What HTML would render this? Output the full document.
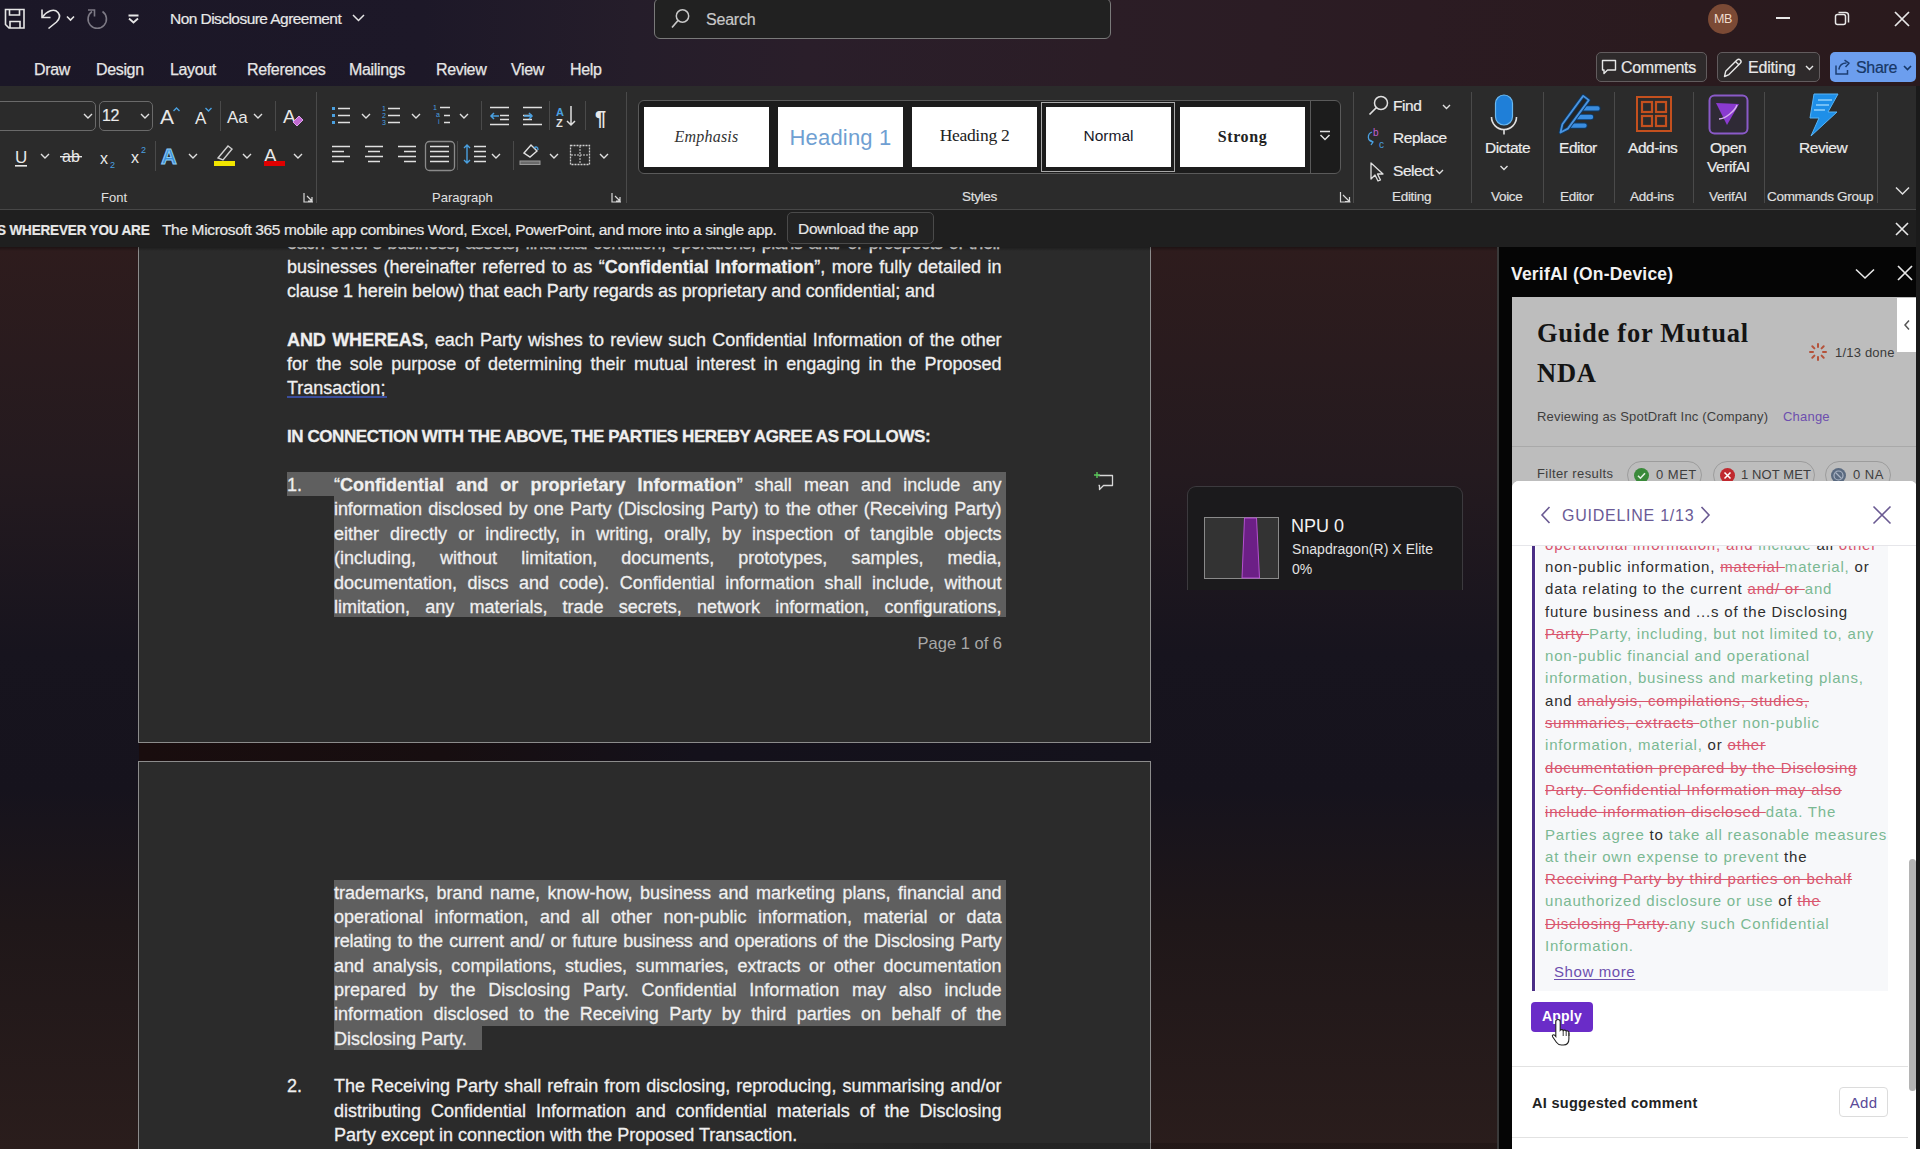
<!DOCTYPE html>
<html><head><meta charset="utf-8">
<style>
*{margin:0;padding:0;box-sizing:border-box}
html,body{width:1920px;height:1149px;overflow:hidden;background:#1a1620;font-family:"Liberation Sans",sans-serif}
.a{position:absolute}
#titlebar{left:0;top:0;width:1920px;height:86px;background:linear-gradient(90deg,#1b1727 0%,#1d1828 22%,#251d2a 33%,#2a1e2a 42%,#2b1d26 58%,#2b1b22 74%,#2a1a1e 88%,#2a1a1d 100%)}
.tt{color:#e8e8e8;font-size:15px;white-space:nowrap;-webkit-text-stroke:0.2px currentColor}
.tab{color:#e6e6e6;font-size:16px;top:60.5px;white-space:nowrap;letter-spacing:-0.35px;-webkit-text-stroke:0.25px #e6e6e6}
#ribbon{left:0;top:86px;width:1920px;height:124px;background:#2b2b2b;border-bottom:1px solid #474747}
#notif{left:0;top:210px;width:1920px;height:37px;background:#1f1f1f}
#docbg{left:0;top:247px;width:1497px;height:902px;background:linear-gradient(180deg,#2e1c1d 0%,#241a1f 25%,#17141e 45%,#16131d 60%,#1f1719 75%,#2a1d1c 100%)}
.page{background:#2b2b2b;border:1px solid #8c8c8c}
.dl{color:#efefef;font-size:18px;white-space:nowrap;height:24px;line-height:24px;-webkit-text-stroke:0.3px #efefef}
.j{text-align:justify;text-align-last:justify;white-space:normal}
.sel{background:#5f5f5f}
#panel{left:1497px;top:247px;width:423px;height:902px;background:#050505;border-left:2px solid #3a3a3a}
.sep{background:#4a4a4a;width:1px}
.lbl{color:#e0e0e0;font-size:13.5px;white-space:nowrap;letter-spacing:-0.3px;-webkit-text-stroke:0.15px #e0e0e0}
.rt{color:#ececec;font-size:15.5px;white-space:nowrap;letter-spacing:-0.45px;-webkit-text-stroke:0.2px #ececec}
.gll{font-size:15px;line-height:22.2px;height:22.2px;white-space:nowrap;letter-spacing:0.8px}
.gll .k{color:#2e2e2e}.gll .r{color:#d9566e;text-decoration:line-through;text-decoration-thickness:1px}.gll .g{color:#7bb893}
</style></head><body>
<div id="titlebar" class="a"></div>
<!-- title bar content -->
<svg class="a" style="left:0;top:0" width="420" height="44">
 <g fill="none" stroke="#e6e6e6" stroke-width="1.6">
  <path d="M5.5 9.5h18.5v18.5h-15l-3.5-3.5z"/><path d="M9.5 9.5v5.5h10v-5.5"/><path d="M10 28v-6.5h10v6.5"/>
  <path d="M42 9.5v8h8.5"/><path d="M42.5 17C47 11 54 8 58 12.5C60.5 15.5 59.5 19 56.5 22L48.5 28.5"/>
  <path d="M67 16.5l3.5 3.5 3.5-3.5" stroke-width="1.6"/>
  <path d="M128.5 15.5h10M129 18.5l4.5 4 4.5-4" stroke-width="1.8"/>
 </g>
 <g fill="none" stroke="#7d7a85" stroke-width="1.6"><path d="M102.5 11.5A9.2 9.2 0 1 1 92 11.5"/><path d="M88 10h6.5v6.5"/></g>
 <path d="M353 15l5.5 5.5 5.5-5.5" fill="none" stroke="#e6e6e6" stroke-width="1.5"/>
</svg>
<div class="a tt" style="left:170px;top:10px;font-size:15.5px;letter-spacing:-0.55px">Non Disclosure Agreement</div>
<div class="a" style="left:654px;top:-2px;width:457px;height:41px;background:#212121;border:1.5px solid #7a7a7a;border-radius:6px"></div>
<svg class="a" style="left:668px;top:6px" width="28" height="26"><circle cx="14.5" cy="10" r="6.2" fill="none" stroke="#c8c8c8" stroke-width="1.5"/><path d="M10 14.5L4 21.5" stroke="#c8c8c8" stroke-width="1.7"/></svg>
<div class="a tt" style="left:706px;top:11px;font-size:16px;color:#c8c8c8;letter-spacing:-0.2px">Search</div>
<div class="a" style="left:1708px;top:4px;width:30px;height:30px;border-radius:50%;background:#7b4a35"></div>
<div class="a" style="left:1708px;top:11.5px;width:30px;text-align:center;color:#f0dccc;font-size:12.5px;letter-spacing:-0.4px">MB</div>
<div class="a" style="left:1776px;top:17px;width:14px;height:1.6px;background:#e8e8e8"></div>
<svg class="a" style="left:1832px;top:8px" width="22" height="22"><rect x="3.5" y="6.5" width="10" height="10" rx="2" fill="none" stroke="#e8e8e8" stroke-width="1.5"/><path d="M6.5 4.5h7a3 3 0 0 1 3 3v7" fill="none" stroke="#e8e8e8" stroke-width="1.5"/></svg>
<svg class="a" style="left:1892px;top:9px" width="20" height="20"><path d="M3 3l14 14M17 3L3 17" stroke="#e8e8e8" stroke-width="1.7"/></svg>
<div class="a tab" style="left:34px">Draw</div>
<div class="a tab" style="left:96px">Design</div>
<div class="a tab" style="left:170px">Layout</div>
<div class="a tab" style="left:247px">References</div>
<div class="a tab" style="left:349px">Mailings</div>
<div class="a tab" style="left:436px">Review</div>
<div class="a tab" style="left:511px">View</div>
<div class="a tab" style="left:570px">Help</div>
<div class="a" style="left:1596px;top:52px;width:111px;height:30px;background:#2e2a2b;border:1px solid #625c5e;border-radius:5px"></div>
<svg class="a" style="left:1600px;top:58px" width="20" height="20"><path d="M2.5 2.5h13v9.5h-8l-3.5 3.5v-3.5h-1.5z" fill="none" stroke="#e8e8e8" stroke-width="1.4" stroke-linejoin="round"/></svg>
<div class="a tt" style="left:1621px;top:59px;font-size:16px;letter-spacing:-0.3px">Comments</div>
<div class="a" style="left:1717px;top:52px;width:103px;height:30px;background:#2e2a2b;border:1px solid #625c5e;border-radius:5px"></div>
<svg class="a" style="left:1721px;top:56px" width="24" height="24"><path d="M3.5 20.5l1.2-5.2L16 4a2.3 2.3 0 0 1 3.3 3.3L8 18.6z M14.5 5.5l3.5 3.5" fill="none" stroke="#e8e8e8" stroke-width="1.4" stroke-linejoin="round"/></svg>
<div class="a tt" style="left:1748px;top:59px;font-size:16px;letter-spacing:-0.2px">Editing</div>
<svg class="a" style="left:1804px;top:63px" width="12" height="10"><path d="M2 3l3.5 3.5L9 3" fill="none" stroke="#e8e8e8" stroke-width="1.4"/></svg>
<div class="a" style="left:1830px;top:52px;width:86px;height:30px;background:#6c9eee;border-radius:5px"></div>
<svg class="a" style="left:1834px;top:57px" width="22" height="22"><path d="M2 8.5V17H13.5V13" fill="none" stroke="#1d3f73" stroke-width="1.5"/><path d="M4.8 12.5C5.5 8.5 8.5 6 12.5 6" fill="none" stroke="#1d3f73" stroke-width="1.5"/><path d="M10.5 3.2L15 6.2L11.5 10" fill="none" stroke="#1d3f73" stroke-width="1.5" stroke-linejoin="round"/></svg>
<div class="a tt" style="left:1856px;top:59px;font-size:16px;color:#173766;letter-spacing:-0.3px">Share</div>
<svg class="a" style="left:1902px;top:63px" width="12" height="10"><path d="M2 3l3.5 3.5L9 3" fill="none" stroke="#173766" stroke-width="1.6"/></svg>
<div id="ribbon" class="a"></div>
<!-- ribbon: font group -->
<div class="a" style="left:-10px;top:101px;width:106px;height:30px;border:1px solid #6a6a6a;border-radius:5px"></div>
<div class="a" style="left:99px;top:101px;width:54px;height:30px;border:1px solid #6a6a6a;border-radius:5px"></div>
<div class="a rt" style="left:102px;top:107px;font-size:16px">12</div>
<svg class="a" style="left:0;top:86px" width="320" height="124">
 <g fill="none" stroke="#e0e0e0" stroke-width="1.4">
  <path d="M84 28l4 4 4-4M141 28l4 4 4-4M254 28l4 4 4-4M41 68l4 4 4-4M189 68l4 4 4-4M243 68l4 4 4-4M294 68l4 4 4-4"/>
 </g>
 <g fill="#e8e8e8" font-family="Liberation Sans" >
  <text x="160" y="38" font-size="21">A</text>
  <text x="195" y="38" font-size="17">A</text>
  <text x="227" y="37" font-size="17">Aa</text>
  <text x="283" y="37" font-size="19">A</text>
  <text x="15" y="77" font-size="17">U</text>
  <text x="62" y="76" font-size="16">ab</text>
  <text x="100" y="78" font-size="16">x</text>
  <text x="131" y="77" font-size="16">x</text>
  <text x="264" y="76" font-size="19">A</text>
 </g>
 <path d="M173.5 25l3-3 3 3" fill="none" stroke="#4aa0e0" stroke-width="1.4"/>
 <path d="M205.5 22l3 3 3-3" fill="none" stroke="#4aa0e0" stroke-width="1.4"/>
 <rect x="15" y="79" width="12" height="1.6" fill="#e8e8e8"/>
 <rect x="60" y="70" width="22" height="1.4" fill="#e8e8e8"/>
 <text x="110" y="82" font-size="9" fill="#4aa0e0" font-family="Liberation Sans">2</text>
 <text x="141" y="67" font-size="9" fill="#4aa0e0" font-family="Liberation Sans">2</text>
 <path d="M293 36l6-6 4 4-6 6z" fill="#c06ad0" stroke="#e0a0ee" stroke-width="1"/>
 <text x="161" y="78" font-size="22" font-weight="bold" fill="#3b8fd8" stroke="#8ccaf5" stroke-width="1" font-family="Liberation Sans">A</text>
 <path d="M218 72l10-12 4 3-9 11z" fill="none" stroke="#cfcfcf" stroke-width="1.4"/>
 <rect x="214" y="75" width="21" height="5" fill="#f2e600"/>
 <rect x="264" y="75" width="21" height="5" fill="#e00000"/>
 <rect x="220" y="15" width="1" height="30" fill="#4a4a4a"/><rect x="275" y="15" width="1" height="30" fill="#4a4a4a"/>
 <rect x="155" y="55" width="1" height="30" fill="#4a4a4a"/>
 <text x="101" y="116" font-size="13" fill="#e0e0e0" font-family="Liberation Sans">Font</text>
 <path d="M304 107v9h9M307 110l5 5M308 115h4v-4" fill="none" stroke="#d8d8d8" stroke-width="1.2"/>
 <rect x="316" y="6" width="1" height="111" fill="#4a4a4a"/>
</svg>
<!-- paragraph group -->
<svg class="a" style="left:320px;top:86px" width="320" height="124">
 <g fill="#4aa0e0"><rect x="12" y="21" width="3" height="3"/><rect x="12" y="28" width="3" height="3"/><rect x="12" y="35" width="3" height="3"/></g>
 <g stroke="#e0e0e0" stroke-width="1.5"><path d="M18 22.5h12M18 29.5h12M18 36.5h12"/><path d="M68 22.5h12M68 29.5h12M68 36.5h12"/><path d="M120 21.5h10M124 29.5h6M124 36.5h6"/></g>
 <g fill="#4aa0e0" font-size="7" font-family="Liberation Sans"><text x="62" y="25">1</text><text x="62" y="32">2</text><text x="62" y="39">3</text><text x="113" y="24">1</text><text x="116" y="31">a</text><text x="118" y="38">i</text></g>
 <g fill="none" stroke="#e0e0e0" stroke-width="1.4"><path d="M42 28l4 4 4-4M92 28l4 4 4-4M140 28l4 4 4-4"/></g>
 <g stroke="#e0e0e0" stroke-width="1.5"><path d="M170 21.5h19M180 29.5h9M180 33.5h9M170 38.5h19"/><path d="M203 21.5h19M203 29.5h9M203 33.5h9M203 38.5h19"/></g>
 <path d="M171 30h8M174 27l-3 3 3 3" fill="none" stroke="#4aa0e0" stroke-width="1.5"/>
 <path d="M204 30h8M209 27l3 3-3 3" fill="none" stroke="#4aa0e0" stroke-width="1.5"/>
 <text x="236" y="30" font-size="11" font-weight="bold" fill="#4aa0e0" font-family="Liberation Sans">A</text>
 <text x="236" y="41" font-size="11" font-weight="bold" fill="#e0e0e0" font-family="Liberation Sans">Z</text>
 <path d="M251 20v19M247 35l4 4 4-4" fill="none" stroke="#e0e0e0" stroke-width="1.5"/>
 <text x="275" y="39" font-size="20" font-weight="bold" fill="#e8e8e8" font-family="Liberation Sans">¶</text>
 <g fill="#4a4a4a"><rect x="161" y="15" width="1" height="29"/><rect x="229" y="15" width="1" height="29"/><rect x="265" y="15" width="1" height="29"/><rect x="137" y="55" width="1" height="29"/><rect x="193" y="55" width="1" height="29"/></g>
<g transform="translate(9,0)">
 <g stroke="#e0e0e0" stroke-width="1.5"><path d="M3 60.5h18M3 65.5h12M3 70.5h18M3 75.5h12"/><path d="M36 60.5h18M39 65.5h12M36 70.5h18M39 75.5h12"/><path d="M69 60.5h18M75 65.5h12M69 70.5h18M75 75.5h12"/><path d="M101 60.5h19M101 65.5h19M101 70.5h19M101 75.5h19"/></g>
 <rect x="96.5" y="55.5" width="29" height="29" rx="4" fill="none" stroke="#8a8a8a" stroke-width="1.3"/>
 <g stroke="#e0e0e0" stroke-width="1.5"><path d="M145 60.5h12M145 65.5h12M145 70.5h12M145 75.5h12"/></g>
 <path d="M138 59v18M135 62l3-3 3 3M135 74l3 3 3-3" fill="none" stroke="#4aa0e0" stroke-width="1.4"/>
 </g>
 <g fill="none" stroke="#e0e0e0" stroke-width="1.4"><path d="M172 68l4 4 4-4M230 68l4 4 4-4M280 68l4 4 4-4"/></g>
 <path d="M204 67l7-8 6 6-7 6z" fill="none" stroke="#e0e0e0" stroke-width="1.4"/><path d="M214 62c2-2 4-1 4 2" fill="none" stroke="#4aa0e0" stroke-width="1.4"/>
 <rect x="200" y="75" width="20" height="3.5" fill="#6a6a6a" stroke="#9a9a9a" stroke-width="1"/>
 <rect x="250.5" y="59.5" width="19" height="19" fill="none" stroke="#d0d0d0" stroke-width="1.3" stroke-dasharray="2 1"/>
 <path d="M260 60v18M251 69h18" stroke="#d0d0d0" stroke-width="1" stroke-dasharray="2 1"/>
 <text x="112" y="116" font-size="13" fill="#e0e0e0" font-family="Liberation Sans">Paragraph</text>
 <path d="M292 107v9h9M295 110l5 5M296 115h4v-4" fill="none" stroke="#d8d8d8" stroke-width="1.2"/>
 <rect x="306" y="6" width="1" height="111" fill="#4a4a4a"/>
</svg>
<!-- styles group -->
<div class="a" style="left:638px;top:100px;width:703px;height:74px;background:#1c1c1c;border:1px solid #5a5a5a;border-radius:6px"></div>
<div class="a" style="left:1310px;top:101px;width:1px;height:72px;background:#5a5a5a"></div>
<div class="a" style="left:644px;top:107px;width:125px;height:60px;background:#fff"></div>
<div class="a" style="left:778px;top:107px;width:125px;height:60px;background:#fff"></div>
<div class="a" style="left:912px;top:107px;width:125px;height:60px;background:#fff"></div>
<div class="a" style="left:1041px;top:102px;width:134px;height:70px;border:1.5px solid #a8a8a8"></div>
<div class="a" style="left:1046px;top:107px;width:125px;height:60px;background:#fff"></div>
<div class="a" style="left:1180px;top:107px;width:125px;height:60px;background:#fff"></div>
<div class="a" style="left:644px;top:127.5px;width:125px;text-align:center;font:italic 16px 'Liberation Serif';color:#333;letter-spacing:0.2px">Emphasis</div>
<div class="a" style="left:778px;top:124.5px;width:125px;text-align:center;font:22px 'Liberation Sans';color:#6f9fd2;letter-spacing:0.2px">Heading 1</div>
<div class="a" style="left:912px;top:125px;width:125px;text-align:center;font:17.5px 'Liberation Serif';color:#222;letter-spacing:-0.3px">Heading 2</div>
<div class="a" style="left:1046px;top:127px;width:125px;text-align:center;font:15.5px 'Liberation Sans';color:#1a1a2a">Normal</div>
<div class="a" style="left:1180px;top:127.5px;width:125px;text-align:center;font:bold 16px 'Liberation Serif';color:#222;letter-spacing:0.6px">Strong</div>
<svg class="a" style="left:1316px;top:128px" width="18" height="16"><path d="M4 3.5h10M4.5 7l4.5 4.5L13.5 7" fill="none" stroke="#e0e0e0" stroke-width="1.5"/></svg>
<div class="a lbl" style="left:962px;top:189px">Styles</div>
<svg class="a" style="left:1338px;top:190px" width="16" height="16"><path d="M2.5 2v10h10M5 5l6 6M7 11.5h4.5V7" fill="none" stroke="#d8d8d8" stroke-width="1.2"/></svg>
<div class="a sep" style="left:1353px;top:92px;height:111px"></div>
<!-- editing group -->
<svg class="a" style="left:1360px;top:86px" width="120" height="124">
 <circle cx="21" cy="17" r="6.5" fill="none" stroke="#e0e0e0" stroke-width="1.5"/><path d="M16.5 21.5L9.5 28.5" stroke="#e0e0e0" stroke-width="1.7"/>
 <path d="M83 19l3.5 3.5 3.5-3.5M76 84l3.5 3.5 3.5-3.5" fill="none" stroke="#e0e0e0" stroke-width="1.4"/>
 <text x="13" y="50" font-size="10" fill="#c060d0" font-family="Liberation Sans">b</text>
 <text x="19" y="62" font-size="10" fill="#4aa0e0" font-family="Liberation Sans">c</text>
 <path d="M12 46c-5 2-5 9 1 10M10 54l3 2-2 3" fill="none" stroke="#4aa0e0" stroke-width="1.3"/>
 <path d="M11 77v16l4-4 3 6 2.5-1-3-6h5.5z" fill="none" stroke="#e0e0e0" stroke-width="1.3" stroke-linejoin="round"/>
</svg>
<div class="a rt" style="left:1393px;top:97px">Find</div>
<div class="a rt" style="left:1393px;top:129px">Replace</div>
<div class="a rt" style="left:1393px;top:162px">Select</div>
<div class="a lbl" style="left:1392px;top:189px">Editing</div>
<div class="a sep" style="left:1471px;top:92px;height:111px"></div>
<!-- voice -->
<svg class="a" style="left:1480px;top:86px" width="60" height="90">
 <rect x="15.5" y="9" width="17" height="30" rx="8.5" fill="#1f7fd8" stroke="#6ab8f0" stroke-width="1.2"/>
 <path d="M11.5 31a12.5 12.5 0 0 0 25 0M24 43.5v5" fill="none" stroke="#e0e0e0" stroke-width="1.6"/>
 <path d="M20.5 80l3.5 3.5 3.5-3.5" fill="none" stroke="#e0e0e0" stroke-width="1.4"/>
</svg>
<div class="a rt" style="left:1485px;top:139px">Dictate</div>
<div class="a lbl" style="left:1491px;top:189px">Voice</div>
<div class="a sep" style="left:1543px;top:92px;height:111px"></div>
<!-- editor -->
<svg class="a" style="left:1555px;top:90px" width="50" height="50">
 <path d="M28 18.4h14.5M22 27h14M15 35.6h14.5" stroke="#0d3a66" stroke-width="6.2" stroke-linecap="round"/>
 <path d="M28 18.4h14.5M22 27h14M15 35.6h14.5" stroke="#3a8de0" stroke-width="4.4" stroke-linecap="round"/>
 <path d="M5.5 42.5L7.4 34.2L28.2 5.9L33.8 10.1L12.9 38.6Z" fill="#242424" stroke="#0d3a66" stroke-width="3.6" stroke-linejoin="round"/>
 <path d="M5.5 42.5L7.4 34.2L28.2 5.9L33.8 10.1L12.9 38.6Z" fill="none" stroke="#4a94e0" stroke-width="1.8" stroke-linejoin="round"/>
</svg>
<div class="a rt" style="left:1559px;top:139px">Editor</div>
<div class="a lbl" style="left:1560px;top:189px">Editor</div>
<div class="a sep" style="left:1614px;top:92px;height:111px"></div>
<!-- addins -->
<div class="a" style="left:1636px;top:96px;width:36px;height:36px;border:2.5px solid #c4501e"></div>
<svg class="a" style="left:1636px;top:96px" width="36" height="36"><g fill="none" stroke="#c4501e" stroke-width="2.2"><rect x="6" y="6" width="10" height="10"/><rect x="20" y="6" width="10" height="10"/><rect x="6" y="20" width="10" height="10"/><rect x="20" y="20" width="10" height="10"/></g></svg>
<div class="a rt" style="left:1628px;top:139px">Add-ins</div>
<div class="a lbl" style="left:1630px;top:189px">Add-ins</div>
<div class="a sep" style="left:1693px;top:92px;height:111px"></div>
<!-- verifai -->
<svg class="a" style="left:1708px;top:94px" width="42" height="42">
 <rect x="1.5" y="1.5" width="38" height="38" rx="5" fill="#2f2a36" stroke="#8a5ac8" stroke-width="2"/>
 <path d="M8 9l23 1-12 21z" fill="#8a3ad0"/>
 <path d="M11 25c6 0 16-8 18-14" fill="none" stroke="#d8b0f0" stroke-width="1.5"/>
</svg>
<div class="a rt" style="left:1710px;top:139px">Open</div>
<div class="a rt" style="left:1707px;top:158px">VerifAI</div>
<div class="a lbl" style="left:1709px;top:189px">VerifAI</div>
<div class="a sep" style="left:1764px;top:92px;height:111px"></div>
<!-- review -->
<svg class="a" style="left:1800px;top:92px" width="44" height="46">
 <path d="M14 2h24l-10 18h9l-26 24 8-18h-9z" fill="#1e8fe8" stroke="#56b4f6" stroke-width="1"/>
 <path d="M18 8h14M16 13h13M14 18h11" stroke="#8fd0fa" stroke-width="1.6"/>
</svg>
<div class="a rt" style="left:1799px;top:139px">Review</div>
<div class="a lbl" style="left:1767px;top:189px">Commands Group</div>
<div class="a sep" style="left:1877px;top:92px;height:111px"></div>
<svg class="a" style="left:1893px;top:184px" width="20" height="14"><path d="M3 3.5l6.5 6.5 6.5-6.5" fill="none" stroke="#e0e0e0" stroke-width="1.5"/></svg>
<div id="notif" class="a"></div>
<div class="a tt" style="left:-3px;top:222px;font-size:14.5px;font-weight:bold;letter-spacing:-0.2px;transform:scaleX(0.935);transform-origin:0 0">S WHEREVER YOU ARE</div>
<div class="a tt" style="left:162px;top:221px;font-size:15.5px;letter-spacing:-0.35px">The Microsoft 365 mobile app combines Word, Excel, PowerPoint, and more into a single app.</div>
<div class="a" style="left:787px;top:212px;width:147px;height:32px;border:1px solid #4a4a4a;border-radius:5px;background:#232323"></div>
<div class="a tt" style="left:798px;top:220px;font-size:15.5px;letter-spacing:-0.3px">Download the app</div>
<svg class="a" style="left:1894px;top:221px" width="16" height="16"><path d="M2 2l12 12M14 2L2 14" stroke="#e8e8e8" stroke-width="1.6"/></svg>
<div id="docbg" class="a"></div>
<!-- document -->
<div class="a" style="left:0;top:247px;width:1497px;height:902px;overflow:hidden"><div class="a" style="left:0;top:-247px;width:1920px;height:1149px">
<div class="a page" style="left:138px;top:200px;width:1013px;height:543px"></div>
<div class="a page" style="left:138px;top:761px;width:1013px;height:420px"></div>
<div class="a" style="left:139px;top:743px;width:1011px;height:18px;background:linear-gradient(90deg,#190d0e 0%,#170e10 30%,#14111b 55%,#14121c 100%)"></div>
<div class="a sel" style="left:287px;top:472.2px;width:47px;height:24.2px"></div>
<div class="a sel" style="left:334px;top:472.2px;width:672px;height:145.3px"></div>
<div class="a sel" style="left:334px;top:880px;width:672px;height:146px"></div>
<div class="a sel" style="left:334px;top:1025.5px;width:148px;height:24.5px"></div>
<div class="a dl j" style="left:287px;top:231.3px;width:714.5px;letter-spacing:-0.46px;">each other’s business, assets, financial condition, operations, plans and/ or prospects of their</div>
<div class="a dl j" style="left:287px;top:255.3px;width:714.5px;">businesses (hereinafter referred to as “<b>Confidential Information</b>”, more fully detailed in</div>
<div class="a dl" style="left:287px;top:279.4px;width:714.5px;"><span style='letter-spacing:-0.13px'>clause 1 herein below) that each Party regards as proprietary and confidential; and</span></div>
<div class="a dl j" style="left:287px;top:327.8px;width:714.5px;letter-spacing:-0.08px;"><b>AND WHEREAS</b>, each Party wishes to review such Confidential Information of the other</div>
<div class="a dl j" style="left:287px;top:352.3px;width:714.5px;">for the sole purpose of determining their mutual interest in engaging in the Proposed</div>
<div class="a dl" style="left:287px;top:376.3px;width:714.5px;"><span class='ul'>Transaction;</span></div>
<div class="a dl" style="left:287px;top:424.4px;width:714.5px;"><b style='font-size:17px;letter-spacing:-0.42px'>IN CONNECTION WITH THE ABOVE, THE PARTIES HEREBY AGREE AS FOLLOWS:</b></div>
<div class="a dl" style="left:287px;top:472.8px;width:47.0px;">1.</div>
<div class="a dl j" style="left:334px;top:472.8px;width:667.5px;">“<b>Confidential and or proprietary Information</b>” shall mean and include any</div>
<div class="a dl j" style="left:334px;top:497.3px;width:667.5px;letter-spacing:-0.11px;">information disclosed by one Party (Disclosing Party) to the other (Receiving Party)</div>
<div class="a dl j" style="left:334px;top:521.8px;width:667.5px;">either directly or indirectly, in writing, orally, by inspection of tangible objects</div>
<div class="a dl j" style="left:334px;top:546.1px;width:667.5px;">(including, without limitation, documents, prototypes, samples, media,</div>
<div class="a dl j" style="left:334px;top:570.5px;width:667.5px;">documentation, discs and code). Confidential information shall include, without</div>
<div class="a dl j" style="left:334px;top:594.8px;width:667.5px;">limitation, any materials, trade secrets, network information, configurations,</div>
<div class="a dl j" style="left:334px;top:880.8px;width:667.5px;">trademarks, brand name, know-how, business and marketing plans, financial and</div>
<div class="a dl j" style="left:334px;top:905.1px;width:667.5px;">operational information, and all other non-public information, material or data</div>
<div class="a dl j" style="left:334px;top:929.4px;width:667.5px;letter-spacing:-0.21px;">relating to the current and/ or future business and operations of the Disclosing Party</div>
<div class="a dl j" style="left:334px;top:953.7px;width:667.5px;">and analysis, compilations, studies, summaries, extracts or other documentation</div>
<div class="a dl j" style="left:334px;top:978.0px;width:667.5px;">prepared by the Disclosing Party. Confidential Information may also include</div>
<div class="a dl j" style="left:334px;top:1002.3px;width:667.5px;">information disclosed to the Receiving Party by third parties on behalf of the</div>
<div class="a dl" style="left:334px;top:1026.6px;width:667.5px;">Disclosing Party.</div>
<div class="a dl" style="left:287px;top:1074.4px;width:47.0px;">2.</div>
<div class="a dl j" style="left:334px;top:1074.4px;width:667.5px;">The Receiving Party shall refrain from disclosing, reproducing, summarising and/or</div>
<div class="a dl j" style="left:334px;top:1098.6px;width:667.5px;">distributing Confidential Information and confidential materials of the Disclosing</div>
<div class="a dl" style="left:334px;top:1122.8px;width:667.5px;">Party except in connection with the Proposed Transaction.</div>
<div class="a" style="left:287px;top:395.5px;width:100px;height:2px;background:#3a4d9c"></div>
<div class="a" style="left:900px;top:634px;width:102px;text-align:right;color:#a8a8a8;font-size:16.5px;white-space:nowrap">Page 1 of 6</div>
<svg class="a" style="left:1092px;top:470px" width="24" height="22"><path d="M6.5 5.5h14v10h-9l-4 4v-4h-1" fill="none" stroke="#d8d8d8" stroke-width="1.3" stroke-linejoin="round"/><path d="M5 2v6M2 5h6" stroke="#5ac85a" stroke-width="1.4"/></svg>
<div class="a" style="left:139px;top:1143px;width:1358px;height:6px;background:linear-gradient(90deg,rgba(0,0,0,0) 0%,rgba(0,0,0,0) 45%,rgba(0,0,0,0.16) 60%,rgba(0,0,0,0.16) 100%)"></div>
</div></div>
<div class="a" style="left:0;top:247px;width:1497px;height:4px;background:linear-gradient(180deg,rgba(0,0,0,0.35),rgba(0,0,0,0))"></div>
<div id="panel" class="a"></div>
<div class="a" style="left:1511px;top:263.5px;color:#f2f2f2;font-size:17.5px;font-weight:bold;letter-spacing:0.2px;white-space:nowrap">VerifAI (On-Device)</div>
<svg class="a" style="left:1852px;top:262px" width="26" height="22"><path d="M4 7.5l9 8.5 9-8.5" fill="none" stroke="#e8e8e8" stroke-width="1.6"/></svg>
<svg class="a" style="left:1895px;top:263px" width="20" height="20"><path d="M3 3l14 14M17 3L3 17" stroke="#e8e8e8" stroke-width="1.7"/></svg>
<!-- web content -->
<div class="a" style="left:1512px;top:297px;width:405px;height:852px;overflow:hidden;background:#bdbdbd">
 <div class="a" style="left:0;top:0;width:1920px;height:1149px;transform:translate(-1512px,-297px)">
  <div class="a" style="left:1537px;top:314px;font:bold 26.5px 'Liberation Serif';color:#141414;letter-spacing:0.75px;white-space:nowrap;line-height:39.5px">Guide for Mutual<br>NDA</div>
  <svg class="a" style="left:1808px;top:342px" width="20" height="20"><g stroke="#b5523a" stroke-width="2" stroke-linecap="round"><path d="M10 2v3M10 15v3M2 10h3M15 10h3M4.3 4.3l2.1 2.1M13.6 13.6l2.1 2.1M4.3 15.7l2.1-2.1M13.6 6.4l2.1-2.1"/></g></svg>
  <div class="a" style="left:1835px;top:345px;font-size:13px;color:#3a3a3a;white-space:nowrap;letter-spacing:0.2px">1/13 done</div>
  <div class="a" style="left:1897px;top:298px;width:20px;height:54px;background:#fff"></div>
  <svg class="a" style="left:1902px;top:318px" width="10" height="14"><path d="M7 2.5L3 7l4 4.5" fill="none" stroke="#555" stroke-width="1.5"/></svg>
  <div class="a" style="left:1537px;top:409px;font-size:13px;color:#3e3e3e;white-space:nowrap;letter-spacing:0.18px">Reviewing as SpotDraft Inc (Company)</div>
  <div class="a" style="left:1783px;top:409px;font-size:13px;color:#6d4fae;white-space:nowrap;letter-spacing:0.2px">Change</div>
  <div class="a" style="left:1512px;top:446px;width:405px;height:1px;background:#a9a9a9"></div>
  <div class="a" style="left:1537px;top:466px;font-size:13px;color:#3e3e3e;white-space:nowrap;letter-spacing:0.4px">Filter results</div>
  <div class="a" style="left:1627px;top:461px;width:75px;height:28px;border:1px solid #9c9c9c;border-radius:14px"></div>
  <div class="a" style="left:1713px;top:461px;width:102px;height:28px;border:1px solid #9c9c9c;border-radius:14px"></div>
  <div class="a" style="left:1825px;top:461px;width:66px;height:28px;border:1px solid #9c9c9c;border-radius:14px"></div>
  <div class="a" style="left:1634px;top:468px;width:15px;height:15px;border-radius:50%;background:#3a8a3a"></div>
  <div class="a" style="left:1720px;top:468px;width:15px;height:15px;border-radius:50%;background:#c0282e"></div>
  <div class="a" style="left:1831px;top:468px;width:15px;height:15px;border-radius:50%;background:#5a6a80"></div>
  <svg class="a" style="left:1634px;top:468px" width="15" height="15"><path d="M4 7.8l2.4 2.4L11 5.2" fill="none" stroke="#e8f4e8" stroke-width="1.6"/></svg>
  <svg class="a" style="left:1720px;top:468px" width="15" height="15"><path d="M4.5 4.5l6 6M10.5 4.5l-6 6" stroke="#fff" stroke-width="1.5"/></svg>
  <svg class="a" style="left:1831px;top:468px" width="15" height="15"><circle cx="7.5" cy="7.5" r="4.5" fill="none" stroke="#aab4c4" stroke-width="1.2"/><path d="M4.5 4.5l6 6" stroke="#aab4c4" stroke-width="1.2"/></svg>
  <div class="a" style="left:1656px;top:467px;font-size:13px;color:#3e3e3e;white-space:nowrap;letter-spacing:0.5px">0 MET</div>
  <div class="a" style="left:1741px;top:467px;font-size:13px;color:#3e3e3e;white-space:nowrap;letter-spacing:0.1px">1 NOT MET</div>
  <div class="a" style="left:1853px;top:467px;font-size:13px;color:#3e3e3e;white-space:nowrap;letter-spacing:0.5px">0 NA</div>
  <!-- modal -->
  <div class="a" style="left:1512px;top:480.5px;width:405px;height:700px;background:#fff;border-radius:7px 7px 0 0"></div>
  <div class="a" style="left:1536px;top:540px;width:352px;height:451px;background:#f7f8fa"></div>
  <div class="a" style="left:1532px;top:540px;width:3px;height:451px;background:#4b2f86"></div>
  
  <!--glstart--><div class="a gll" style="left:1545px;top:533.6px"><span class="r">operational information, and </span><span class="g">include </span><span class="k">all </span><span class="r">other</span></div>
<div class="a gll" style="left:1545px;top:555.9px"><span class="k">non-public information, </span><span class="r">material </span><span class="g">material,</span><span class="k"> or</span></div>
<div class="a gll" style="left:1545px;top:578.2px"><span class="k">data relating to the current </span><span class="r">and/ or </span><span class="g">and</span></div>
<div class="a gll" style="left:1545px;top:600.5px"><span class="k">future business and ...s of the Disclosing</span></div>
<div class="a gll" style="left:1545px;top:622.8px"><span class="r">Party </span><span class="g">Party, including, but not limited to, any</span></div>
<div class="a gll" style="left:1545px;top:645.1px"><span class="g">non-public financial and operational</span></div>
<div class="a gll" style="left:1545px;top:667.4px"><span class="g">information, business and marketing plans,</span></div>
<div class="a gll" style="left:1545px;top:689.7px"><span class="k">and </span><span class="r">analysis, compilations, studies,</span></div>
<div class="a gll" style="left:1545px;top:712.0px"><span class="r">summaries, extracts </span><span class="g">other non-public</span></div>
<div class="a gll" style="left:1545px;top:734.3px"><span class="g">information, material,</span><span class="k"> or </span><span class="r">other</span></div>
<div class="a gll" style="left:1545px;top:756.6px"><span class="r">documentation prepared by the Disclosing</span></div>
<div class="a gll" style="left:1545px;top:778.9px"><span class="r">Party. Confidential Information may also</span></div>
<div class="a gll" style="left:1545px;top:801.2px"><span class="r">include information disclosed </span><span class="g">data. The</span></div>
<div class="a gll" style="left:1545px;top:823.5px"><span class="g">Parties agree </span><span class="k">to </span><span class="g">take all reasonable measures</span></div>
<div class="a gll" style="left:1545px;top:845.8px"><span class="g">at their own expense to prevent </span><span class="k">the</span></div>
<div class="a gll" style="left:1545px;top:868.1px"><span class="r">Receiving Party by third parties on behalf</span></div>
<div class="a gll" style="left:1545px;top:890.4px"><span class="g">unauthorized disclosure or use </span><span class="k">of </span><span class="r">the</span></div>
<div class="a gll" style="left:1545px;top:912.7px"><span class="r">Disclosing Party.</span><span class="g">any such Confidential</span></div>
<div class="a gll" style="left:1545px;top:935.0px"><span class="g">Information.</span></div><!--glend-->
  <div class="a" style="left:1512px;top:480.5px;width:405px;height:65px;background:#fff;border-radius:7px 7px 0 0;border-bottom:1px solid #e6e6ea"></div>
  <svg class="a" style="left:1538px;top:504px" width="16" height="22"><path d="M11.5 3L4 11l7.5 8" fill="none" stroke="#6a5a92" stroke-width="1.6"/></svg>
  <div class="a" style="left:1562px;top:507px;font-size:16px;color:#6a5a96;white-space:nowrap;letter-spacing:0.75px">GUIDELINE 1/13</div>
  <svg class="a" style="left:1697px;top:504px" width="16" height="22"><path d="M4.5 3L12 11l-7.5 8" fill="none" stroke="#6a5a92" stroke-width="1.6"/></svg>
  <svg class="a" style="left:1870px;top:503px" width="24" height="24"><path d="M3.5 3.5l17 17M20.5 3.5l-17 17" stroke="#6a5a92" stroke-width="1.6"/></svg>
  <div class="a" style="left:1554px;top:963px;font-size:15px;color:#6d4fae;white-space:nowrap;letter-spacing:0.6px;text-decoration:underline;text-underline-offset:2px">Show more</div>
  <div class="a" style="left:1531px;top:1001.5px;width:62px;height:30px;background:#6a2cc8;border-radius:4px"></div>
  <div class="a" style="left:1531px;top:1008px;width:62px;text-align:center;font-size:14px;font-weight:bold;color:#fff;letter-spacing:0.2px">Apply</div>
  <svg class="a" style="left:1551px;top:1016px" width="26" height="32"><path d="M7 3.5c1.4 0 2.2.8 2.2 2.2v8.5c.5-.7 2.6-.9 3 .4.6-.8 2.6-.7 3 .6.7-.6 2.6-.3 2.7 1.3v6.5c0 3.5-2 6-5.5 6h-2c-2.5 0-3.7-1-5-2.8l-3.8-5.5c-.8-1.3.9-2.6 2-1.5l1.2 1.3V5.7C4.8 4.3 5.6 3.5 7 3.5z" fill="#fff" stroke="#222" stroke-width="1.1"/><path d="M12.2 15v5M15.2 15.5v4.5M18 16.5v3.5" stroke="#222" stroke-width="0.9"/></svg>
  <div class="a" style="left:1512px;top:1066px;width:396px;height:1px;background:#e2e2e2"></div>
  <div class="a" style="left:1532px;top:1095px;font-size:14.5px;font-weight:bold;color:#222;white-space:nowrap;letter-spacing:0.3px">AI suggested comment</div>
  <div class="a" style="left:1839px;top:1087px;width:49px;height:30px;border:1px solid #dcdcdc;border-radius:4px"></div>
  <div class="a" style="left:1839px;top:1094px;width:49px;text-align:center;font-size:15px;color:#5a4a98;letter-spacing:0.3px">Add</div>
  <div class="a" style="left:1512px;top:1137px;width:396px;height:1px;background:#e2e2e2"></div>
  <div class="a" style="left:1909px;top:859px;width:7px;height:232px;background:#b4b4b4;border-radius:4px"></div>
 </div>
</div>
<div class="a" style="left:1916px;top:86px;width:4px;height:1063px;background:#1a1a1a"></div>
<!-- NPU widget -->
<div class="a" style="left:1187px;top:486px;width:276px;height:104px;background:#1b1a1c;border:1px solid #3c3a3e;border-bottom:none;border-radius:9px 9px 0 0"></div>
<div class="a" style="left:1204px;top:517px;width:75px;height:62px;background:#333;border:1px solid #8a8a8a"></div>
<svg class="a" style="left:1238px;top:517px" width="26" height="62"><path d="M4 61L6.5 1h12L21.5 61z" fill="#6c1f86" stroke="#b450d0" stroke-width="1"/></svg>
<div class="a" style="left:1291px;top:516px;font-size:18px;color:#f2f2f2;white-space:nowrap">NPU 0</div>
<div class="a" style="left:1292px;top:541px;font-size:14px;color:#e2e2e2;white-space:nowrap;letter-spacing:0.05px">Snapdragon(R) X Elite</div>
<div class="a" style="left:1292px;top:561px;font-size:14px;color:#e2e2e2;white-space:nowrap">0%</div>
</body></html>
